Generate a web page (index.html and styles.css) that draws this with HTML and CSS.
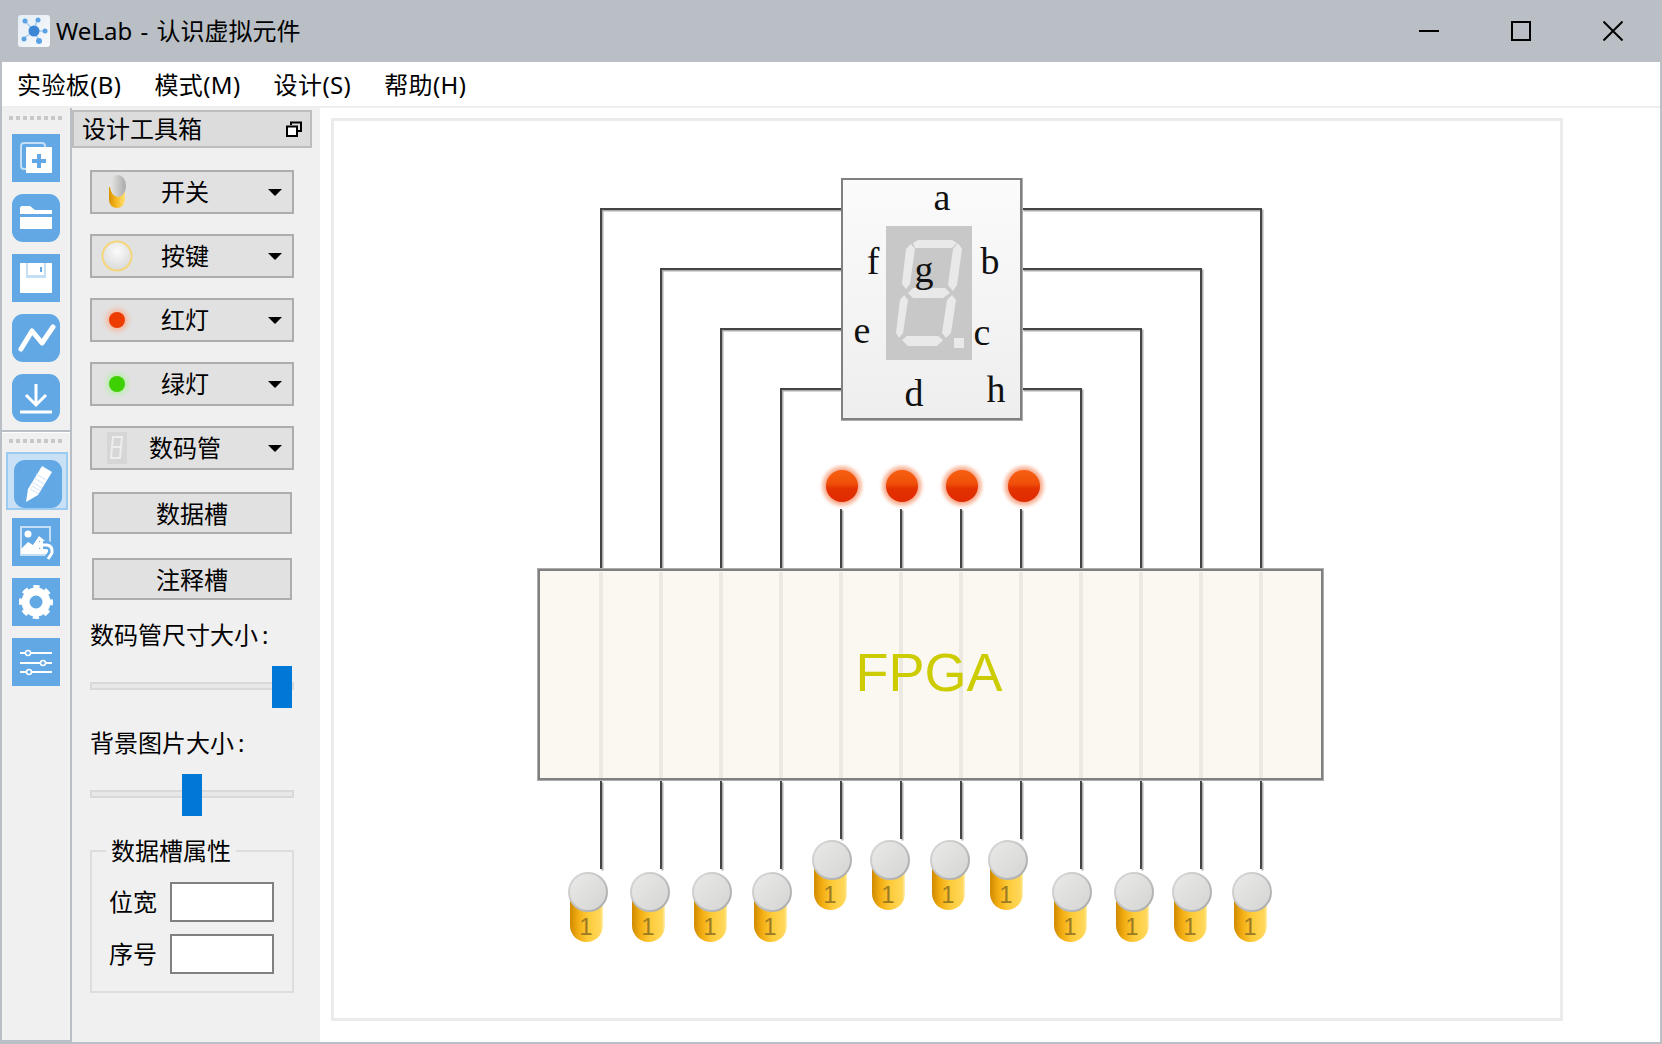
FILE: index.html
```html
<!DOCTYPE html>
<html lang="zh-CN">
<head>
    <meta charset="UTF-8">
    <title>WeLab - 认识虚拟元件</title>
    <link rel="stylesheet" href="styles.css">
</head>
<body>

<div class="window">
    <header class="titlebar">
        <svg class="app-icon" width="32" height="32" viewBox="0 0 32 32">
            <defs>
                <linearGradient id="appBg" x1="0" y1="0" x2="1" y2="1">
                    <stop offset="0" stop-color="#e4edf5"/>
                    <stop offset="1" stop-color="#f7f9fb"/>
                </linearGradient>
            </defs>
            <rect width="32" height="32" rx="3" fill="url(#appBg)"/>
            <path class="app-lines" d="M7 6 16 16M19 5 16 16M25 16H16M6 23 16 16M21 25 16 16"/>
            <circle class="app-dot" cx="16" cy="16" r="5.5"/>
            <circle class="app-dot-s" cx="7" cy="6" r="2.5"/>
            <circle class="app-dot-s" cx="20" cy="5" r="2.5"/>
            <circle class="app-dot-s" cx="27" cy="16" r="2.5"/>
            <circle class="app-dot-s" cx="6" cy="24" r="2.5"/>
            <circle class="app-dot-s" cx="21" cy="26" r="3"/>
        </svg>
        <span class="title-text">WeLab - 认识虚拟元件</span>
        <div class="win-buttons">
            <button class="win-btn" aria-label="minimize">
                <svg width="20" height="20" viewBox="0 0 20 20"><path class="win-glyph" d="M0 10H20"/></svg>
            </button>
            <button class="win-btn" aria-label="maximize">
                <svg width="20" height="20" viewBox="0 0 20 20"><rect class="win-glyph" x="1" y="1" width="18" height="18"/></svg>
            </button>
            <button class="win-btn" aria-label="close">
                <svg width="20" height="20" viewBox="0 0 20 20"><path class="win-glyph" d="M0.5 0.5 19.5 19.5M19.5 0.5 0.5 19.5"/></svg>
            </button>
        </div>
    </header>

    <nav class="menubar">
        <span class="menu-item">实验板(B)</span>
        <span class="menu-item">模式(M)</span>
        <span class="menu-item">设计(S)</span>
        <span class="menu-item">帮助(H)</span>
    </nav>

    <div class="workspace">
        <aside class="toolbar">
            <div class="grip"></div>
            <div class="tool-group">
                <svg class="tool-icon" viewBox="0 0 48 48">
                    <rect class="tile" width="48" height="48"/>
                    <rect class="pale-line" x="9" y="9" width="24" height="26" rx="3"/>
                    <rect class="white" x="14" y="13" width="26" height="26"/>
                    <path class="plus" d="M27 20V34M20 27H34"/>
                </svg>
                <svg class="tool-icon" viewBox="0 0 48 48">
                    <rect class="tile" width="48" height="48" rx="11"/>
                    <path class="white" d="M8 14Q8 12 10 12H18L23 16H40V20H8Z"/>
                    <rect class="white" x="8" y="23" width="32" height="12"/>
                </svg>
                <svg class="tool-icon" viewBox="0 0 48 48">
                    <rect class="tile" width="48" height="48"/>
                    <path class="white" d="M8 9H40V39H8Z"/>
                    <rect class="pale-fill" x="14" y="9" width="20" height="15"/>
                    <rect class="white" x="16" y="9" width="16" height="12"/>
                    <rect class="tile" x="28" y="13" width="2" height="5"/>
                </svg>
                <svg class="tool-icon" viewBox="0 0 48 48">
                    <rect class="tile" width="48" height="48" rx="11"/>
                    <path class="chart-line" d="M9 35 20 17 30 29 41 13"/>
                </svg>
                <svg class="tool-icon" viewBox="0 0 48 48">
                    <rect class="tile" width="48" height="48" rx="11"/>
                    <path class="stroke-w" d="M24 10V31M14 21 24 31 34 21M8 38H40"/>
                </svg>
            </div>
            <div class="toolbar-sep"></div>
            <div class="grip"></div>
            <div class="tool-group tool-group-b">
                <div class="tool-active">
                    <svg class="tool-icon" viewBox="0 0 48 48">
                        <rect class="tile" width="48" height="48" rx="11"/>
                        <path class="white" d="M12 42 14 29 28 6 38 12 24 35Z"/>
                        <path class="hatch" d="M16 29 25 34M22 14 32 20M20 18 30 24M18 22 28 28M18 26 27 31"/>
                    </svg>
                </div>
                <svg class="tool-icon" viewBox="0 0 48 48">
                    <rect class="tile" width="48" height="48"/>
                    <rect class="pale-line" x="9" y="9" width="29" height="28"/>
                    <circle class="white" cx="16" cy="16" r="3.5"/>
                    <path class="white" d="M9 36V31L16 24 21 27 27 18 38 27V36Z"/>
                    <path class="undo undo-gap" d="M27 27H35Q41 28 40 35L36 41"/>
                    <path class="undo" d="M29 27H35Q41 28 40 35L36 41"/>
                    <path class="white" d="M31 21V33L24 27Z"/>
                </svg>
                <svg class="tool-icon" viewBox="0 0 48 48">
                    <rect class="tile" width="48" height="48"/>
                    <circle class="gear-teeth" cx="24" cy="24" r="14.5"/>
                    <circle class="gear-ring" cx="24" cy="24" r="10.5"/>
                </svg>
                <svg class="tool-icon" viewBox="0 0 48 48">
                    <rect class="tile" width="48" height="48"/>
                    <path class="slider-line" d="M8 15H40M8 25H40M8 34H40"/>
                    <circle class="slider-knob" cx="16" cy="15" r="2.5"/>
                    <circle class="slider-knob" cx="31" cy="25" r="2.5"/>
                    <circle class="slider-knob" cx="17" cy="34" r="2.5"/>
                </svg>
            </div>
        </aside>

        <section class="panel">
            <div class="panel-head">
                <span class="panel-title">设计工具箱</span>
                <svg class="float-icon" width="16" height="16" viewBox="0 0 16 16">
                    <path class="float-line" d="M5 4V1.500H15V10H11.500"/>
                    <rect class="float-front" x="1" y="5.500" width="10" height="9.500"/>
                </svg>
            </div>

            <div class="combo">
                <span class="combo-icon">
                    <svg width="20" height="34" viewBox="0 0 20 34">
                        <defs>
                            <linearGradient id="miniBody">
                                <stop offset="0" stop-color="#d99100"/>
                                <stop offset="0.45" stop-color="#f5b91f"/>
                                <stop offset="1" stop-color="#ffe07a"/>
                            </linearGradient>
                            <linearGradient id="miniHead">
                                <stop offset="0" stop-color="#e8e8e6"/>
                                <stop offset="1" stop-color="#a9a9a9"/>
                            </linearGradient>
                        </defs>
                        <path d="M2 12H18V25A8 8 0 0 1 2 25Z" fill="url(#miniBody)"/>
                        <ellipse cx="11" cy="11" rx="8" ry="11" fill="url(#miniHead)"/>
                    </svg>
                </span>
                <span class="combo-label">开关</span>
                <span class="caret"></span>
            </div>
            <div class="combo">
                <span class="combo-icon">
                    <svg width="32" height="32" viewBox="0 0 32 32">
                        <defs>
                            <radialGradient id="miniCap" cx="0.5" cy="0.35" r="0.7">
                                <stop offset="0" stop-color="#fbfbfb"/>
                                <stop offset="1" stop-color="#d6d6d6"/>
                            </radialGradient>
                        </defs>
                        <circle cx="16" cy="16" r="14.500" fill="url(#miniCap)" stroke="#f5d67a" stroke-width="2"/>
                    </svg>
                </span>
                <span class="combo-label">按键</span>
                <span class="caret"></span>
            </div>
            <div class="combo">
                <span class="combo-icon">
                    <span class="mini-led mini-led-red"></span>
                </span>
                <span class="combo-label">红灯</span>
                <span class="caret"></span>
            </div>
            <div class="combo">
                <span class="combo-icon">
                    <span class="mini-led mini-led-green"></span>
                </span>
                <span class="combo-label">绿灯</span>
                <span class="caret"></span>
            </div>
            <div class="combo">
                <span class="combo-icon">
                    <svg width="20" height="32" viewBox="0 0 20 32">
                        <rect width="20" height="32" fill="#d6d6d6"/>
                        <path d="M6 5H15L14 15H5ZM5 15H14L13 26H4Z" fill="none" stroke="#ededed" stroke-width="2"/>
                    </svg>
                </span>
                <span class="combo-label">数码管</span>
                <span class="caret"></span>
            </div>

            <button class="slot-btn slot-btn-first">数据槽</button>
            <button class="slot-btn">注释槽</button>

            <div class="field-label field-label-first">数码管尺寸大小<span class="colon">:</span></div>
            <div class="slider">
                <div class="slider-groove"></div>
                <div class="slider-handle" style="left: 182px"></div>
            </div>

            <div class="field-label">背景图片大小<span class="colon">:</span></div>
            <div class="slider">
                <div class="slider-groove"></div>
                <div class="slider-handle" style="left: 92px"></div>
            </div>

            <fieldset class="group">
                <legend>数据槽属性</legend>
                <div class="form-row">
                    <label>位宽</label>
                    <input type="text" class="form-input">
                </div>
                <div class="form-row">
                    <label>序号</label>
                    <input type="text" class="form-input">
                </div>
            </fieldset>
        </section>

        <main class="board-area">
            <div class="board">
                <!-- viewBox uses window coordinates so the parts can be read off the layout -->
                <svg class="board-svg" width="1226" height="897" viewBox="334 121 1226 897">
                    <defs>
                        <linearGradient id="dispBg" x1="0" y1="0" x2="0" y2="1">
                            <stop offset="0" stop-color="#fbfbfb"/>
                            <stop offset="1" stop-color="#eeeeee"/>
                        </linearGradient>
                        <radialGradient id="ledGlow">
                            <stop offset="0.6" stop-color="#f59272"/>
                            <stop offset="0.8" stop-color="#fbd2c0"/>
                            <stop offset="1" stop-color="#fff" stop-opacity="0"/>
                        </radialGradient>
                        <linearGradient id="ledBall" x1="0" y1="0" x2="0" y2="1">
                            <stop offset="0" stop-color="#f75f10"/>
                            <stop offset="0.42" stop-color="#f0500a"/>
                            <stop offset="0.58" stop-color="#e33200"/>
                            <stop offset="1" stop-color="#e02a00"/>
                        </linearGradient>
                        <linearGradient id="toggleBody">
                            <stop offset="0" stop-color="#cf8a00"/>
                            <stop offset="0.25" stop-color="#f3ad12"/>
                            <stop offset="0.55" stop-color="#fdcb3a"/>
                            <stop offset="0.92" stop-color="#ffd75a"/>
                            <stop offset="1" stop-color="#fff1b5"/>
                        </linearGradient>
                        <linearGradient id="toggleHead" x1="0" y1="0" x2="1" y2="1">
                            <stop offset="0" stop-color="#eaeae8"/>
                            <stop offset="1" stop-color="#d4d4d2"/>
                        </linearGradient>
                        <linearGradient id="toggleRim" x1="0" y1="0" x2="1" y2="1">
                            <stop offset="0" stop-color="#dcdcdc"/>
                            <stop offset="1" stop-color="#a8a8a8"/>
                        </linearGradient>
                        <g id="led">
                            <circle r="24" fill="url(#ledGlow)"/>
                            <circle r="16" fill="url(#ledBall)"/>
                        </g>
                        <g id="toggle">
                            <path d="M-18 0H15V33.500A16.500 16.500 0 0 1 -18 33.500Z" fill="url(#toggleBody)"/>
                            <circle r="19" fill="url(#toggleHead)" stroke="url(#toggleRim)" stroke-width="2"/>
                        </g>
                    </defs>

                    <g class="wire-shadow" transform="translate(1.5 1.5)">
                        <path d="M841 209H601V569M841 269H661V569M841 329H721V569M841 389H781V569"/>
                        <path d="M1022 209H1261V569M1022 269H1201V569M1022 329H1141V569M1022 389H1081V569"/>
                        <path d="M841 509V569M901 509V569M961 509V569M1021 509V569"/>
                        <path d="M601 781V869M661 781V869M721 781V869M781 781V869M841 781V839M901 781V839M961 781V839M1021 781V839M1081 781V869M1141 781V869M1201 781V869M1261 781V869"/>
                    </g>
                    <g class="wire">
                        <path d="M841 209H601V569M841 269H661V569M841 329H721V569M841 389H781V569"/>
                        <path d="M1022 209H1261V569M1022 269H1201V569M1022 329H1141V569M1022 389H1081V569"/>
                        <path d="M841 509V569M901 509V569M961 509V569M1021 509V569"/>
                        <path d="M601 781V869M661 781V869M721 781V869M781 781V869M841 781V839M901 781V839M961 781V839M1021 781V839M1081 781V869M1141 781V869M1201 781V869M1261 781V869"/>
                    </g>

                    <!-- seven segment display -->
                    <rect class="part-edge" x="841" y="178" width="182" height="243"/>
                    <rect class="disp-body" x="842" y="179" width="179" height="240"/>
                    <rect class="disp-face" x="886" y="226" width="86" height="134"/>
                    <g class="segment">
                        <polygon points="913,243 918,240 952,240 957,243 952,248 915,248"/>
                        <polygon points="906,249 911,244 915,249 910,284 906,289 902,284"/>
                        <polygon points="958,243 962,249 957,285 953,291 948,285 953,249"/>
                        <polygon points="908,293 913,288 945,288 950,293 943,298 913,298"/>
                        <polygon points="904,295 908,300 903,333 899,338 896,333 900,300"/>
                        <polygon points="952,295 956,300 951,333 946,338 942,333 947,300"/>
                        <polygon points="902,340 907,336 938,336 943,340 937,346 908,346"/>
                        <rect x="954" y="338" width="10" height="10"/>
                    </g>
                    <g class="pin-name">
                        <text x="942" y="210">a</text>
                        <text x="873" y="274">f</text>
                        <text x="924" y="282">g</text>
                        <text x="990" y="274">b</text>
                        <text x="862" y="343">e</text>
                        <text x="982" y="345">c</text>
                        <text x="914" y="406">d</text>
                        <text x="996" y="402">h</text>
                    </g>

                    <use href="#led" x="842" y="486"/>
                    <use href="#led" x="902" y="486"/>
                    <use href="#led" x="962" y="486"/>
                    <use href="#led" x="1024" y="486"/>

                    <!-- fpga block, wires show faintly through it -->
                    <rect class="part-edge" x="537" y="568" width="787" height="213"/>
                    <rect class="fpga-body" x="539" y="570" width="783" height="209"/>
                    <path class="fpga-rib" d="M601 572V778M661 572V778M721 572V778M781 572V778M841 572V778M901 572V778M961 572V778M1021 572V778M1081 572V778M1141 572V778M1201 572V778M1261 572V778"/>
                    <text class="fpga-text" x="929" y="691">FPGA</text>

                    <use href="#toggle" x="588" y="892"/>
                    <use href="#toggle" x="650" y="892"/>
                    <use href="#toggle" x="712" y="892"/>
                    <use href="#toggle" x="772" y="892"/>
                    <use href="#toggle" x="832" y="860"/>
                    <use href="#toggle" x="890" y="860"/>
                    <use href="#toggle" x="950" y="860"/>
                    <use href="#toggle" x="1008" y="860"/>
                    <use href="#toggle" x="1072" y="892"/>
                    <use href="#toggle" x="1134" y="892"/>
                    <use href="#toggle" x="1192" y="892"/>
                    <use href="#toggle" x="1252" y="892"/>
                    <g class="toggle-num">
                        <text x="586" y="935">1</text>
                        <text x="648" y="935">1</text>
                        <text x="710" y="935">1</text>
                        <text x="770" y="935">1</text>
                        <text x="830" y="903">1</text>
                        <text x="888" y="903">1</text>
                        <text x="948" y="903">1</text>
                        <text x="1006" y="903">1</text>
                        <text x="1070" y="935">1</text>
                        <text x="1132" y="935">1</text>
                        <text x="1190" y="935">1</text>
                        <text x="1250" y="935">1</text>
                    </g>
                </svg>
            </div>
        </main>
    </div>
</div>

</body>
</html>
```

FILE: styles.css
```css
* {
    box-sizing: border-box;
}

body {
    margin: 0;
    font-family: "Noto Sans", "Noto Sans CJK SC", sans-serif;
    font-size: 24px;
    color: #000;
    background-color: #fff;
}

.window {
    width: 1662px;
    height: 1044px;
    display: flex;
    flex-direction: column;
    border: 2px solid #b9bfc4;
    border-top: none;
}

/* title bar */
.titlebar {
    height: 62px;
    flex: none;
    display: flex;
    align-items: center;
    padding-left: 16px;
    background-color: #b9bfc4;
}

.app-icon {
    margin-right: 6px;
}

.app-lines {
    fill: none;
    stroke: #a9cdee;
    stroke-width: 1.5;
}

.app-dot {
    fill: #3c86d6;
}

.app-dot-s {
    fill: #5aa2e4;
}

.title-text {
    line-height: 32px;
    word-spacing: 2px;
}

.win-buttons {
    display: flex;
    margin-left: auto;
    margin-right: 1px;
}

.win-btn {
    width: 92px;
    height: 62px;
    padding: 0;
    border: none;
    background: none;
    display: flex;
    align-items: center;
    justify-content: center;
}

.win-glyph {
    fill: none;
    stroke: #000;
    stroke-width: 2;
}

/* menu */
.menubar {
    height: 46px;
    flex: none;
    display: flex;
    align-items: center;
    gap: 33px;
    padding: 2px 0 0 15px;
    background-color: #fff;
    border-bottom: 2px solid #eeeeee;
}

.menu-item {
    line-height: 32px;
    letter-spacing: 0.4px;
}

.workspace {
    flex: 1;
    display: flex;
    min-height: 0;
}

/* left tool strip */
.toolbar {
    width: 70px;
    flex: none;
    padding-top: 8px;
    background-color: #f0f0f0;
    border-right: 2px solid #b9bfc4;
    border-bottom: 2px solid #b9bfc4;
}

.grip {
    width: 56px;
    height: 4px;
    margin-left: 7px;
    background: repeating-linear-gradient(90deg, #c8c8c8 0, #c8c8c8 4px, transparent 4px, transparent 7px);
}

.tool-group {
    display: flex;
    flex-direction: column;
    align-items: flex-start;
    gap: 12px;
    padding: 14px 0 8px 10px;
}

.tool-group-b {
    padding-top: 9px;
    gap: 12px;
}

.toolbar-sep {
    height: 3px;
    margin-bottom: 6px;
    border-top: 2px solid #b9bfc4;
    border-bottom: 1px solid #fff;
}

.tool-icon {
    width: 48px;
    height: 48px;
    display: block;
    flex: none;
}

.tool-active {
    width: 62px;
    height: 58px;
    margin: 0 0 -4px -6px;
    padding: 6px 0 0 6px;
    background-color: #c9e1f7;
    border: 2px solid #9ccbf2;
}

.tile {
    fill: #62a8e4;
}

.white {
    fill: #fff;
}

.pale-line {
    fill: none;
    stroke: #c4def5;
    stroke-width: 2;
}

.pale-fill {
    fill: #c4def5;
}

.plus {
    fill: none;
    stroke: #62a8e4;
    stroke-width: 4;
}

.chart-line {
    fill: none;
    stroke: #fff;
    stroke-width: 5;
    stroke-linecap: round;
    stroke-linejoin: round;
}

.stroke-w {
    fill: none;
    stroke: #fff;
    stroke-width: 3;
}

.hatch {
    fill: none;
    stroke: #cfe4f7;
    stroke-width: 1;
}

.undo {
    fill: none;
    stroke: #fff;
    stroke-width: 3;
}

.undo-gap {
    stroke: #62a8e4;
    stroke-width: 8;
}

.gear-teeth {
    fill: none;
    stroke: #fff;
    stroke-width: 5;
    stroke-dasharray: 6 5.39;
    stroke-dashoffset: 3;
}

.gear-ring {
    fill: none;
    stroke: #fff;
    stroke-width: 8;
}

.slider-line {
    fill: none;
    stroke: #fff;
    stroke-width: 2;
}

.slider-knob {
    fill: #62a8e4;
    stroke: #fff;
    stroke-width: 1.5;
}

/* design panel */
.panel {
    width: 248px;
    flex: none;
    padding: 2px 0 0 18px;
    background-color: #f0f0f0;
}

.panel-head {
    width: 240px;
    height: 38px;
    margin: 0 0 22px -18px;
    padding: 0 8px;
    display: flex;
    align-items: center;
    justify-content: space-between;
    background-color: #dcdcdc;
    border: 2px solid #bdbdbd;
}

.panel-title {
    padding-bottom: 3px;
}

.float-line {
    fill: none;
    stroke: #000;
    stroke-width: 2;
}

.float-front {
    fill: #fff;
    stroke: #000;
    stroke-width: 2;
}

.combo {
    width: 204px;
    height: 44px;
    margin-bottom: 20px;
    display: flex;
    align-items: center;
    background-color: #e1e1e1;
    border: 2px solid #adadad;
}

.combo-icon {
    width: 52px;
    padding-right: 3px;
    flex: none;
    display: flex;
    align-items: center;
    justify-content: center;
}

.combo-label {
    width: 82px;
    flex: none;
    text-align: center;
    line-height: 32px;
}

.caret {
    width: 0;
    height: 0;
    margin-left: 42px;
    border-left: 7px solid transparent;
    border-right: 7px solid transparent;
    border-top: 7px solid #000;
}

.mini-led {
    width: 16px;
    height: 16px;
    border-radius: 50%;
}

.mini-led-red {
    background-color: #ec3c02;
    box-shadow: 0 0 5px 3px #f7b9a0;
}

.mini-led-green {
    background-color: #3ed000;
    box-shadow: 0 0 5px 3px #bdeeb0;
}

.slot-btn {
    display: block;
    width: 200px;
    height: 42px;
    margin: 0 0 24px 2px;
    padding: 0 0 2px;
    font: inherit;
    color: #000;
    background-color: #e1e1e1;
    border: 2px solid #adadad;
}

.slot-btn-first {
    margin-top: 22px;
}

.field-label {
    height: 32px;
    line-height: 32px;
    margin-bottom: 15px;
    white-space: nowrap;
}

.field-label-first {
    margin-top: -5px;
}

.colon {
    margin-left: 4px;
}

.slider {
    position: relative;
    width: 204px;
    height: 42px;
    margin-bottom: 19px;
}

.slider-groove {
    position: absolute;
    left: 0;
    right: 0;
    top: 16px;
    height: 8px;
    background-color: #e8e8e8;
    border: 2px solid #d9d9d9;
}

.slider-handle {
    position: absolute;
    top: 0;
    width: 20px;
    height: 42px;
    background-color: #0078d7;
}

.group {
    width: 204px;
    height: 158px;
    margin: 18px 0 0 0;
    padding: 15px 0 0 17px;
    border: 2px solid #dddddd;
}

.group legend {
    margin-left: -3px;
    padding: 0 5px;
    line-height: 32px;
}

.form-row {
    display: flex;
    align-items: center;
    height: 40px;
    margin-bottom: 12px;
}

.form-row label {
    width: 61px;
    flex: none;
    line-height: 32px;
}

.form-input {
    width: 104px;
    height: 40px;
    padding: 0;
    background-color: #fff;
    border: 2px solid #808080;
    border-radius: 0;
    outline: none;
}

/* board */
.board-area {
    flex: 1;
    min-width: 0;
    padding: 10px 0 0 11px;
    background-color: #fff;
}

.board {
    width: 1232px;
    height: 903px;
    background-color: #fff;
    border: 3px solid #ebebeb;
}

.board-svg {
    display: block;
}

.wire,
.wire-shadow {
    fill: none;
    stroke-width: 2;
}

.wire {
    stroke: #444444;
}

.wire-shadow {
    stroke: #adadad;
}

.part-edge {
    fill: #adadad;
}

.disp-body {
    fill: url(#dispBg);
    stroke: #808080;
    stroke-width: 2;
}

.disp-face {
    fill: #c8c8c8;
}

.segment {
    fill: #e9e9e9;
}

.pin-name text {
    font-family: "Liberation Serif", serif;
    font-size: 38px;
    text-anchor: middle;
    fill: #111;
}

.fpga-body {
    fill: #faf8f1;
    stroke: #808080;
    stroke-width: 2;
}

.fpga-rib {
    fill: none;
    stroke: #ece9e2;
    stroke-width: 4;
}

.fpga-text {
    font-family: "Liberation Sans", Arial, sans-serif;
    font-size: 54px;
    text-anchor: middle;
    fill: #cccc00;
}

.toggle-num text {
    font-family: "Liberation Sans", Arial, sans-serif;
    font-size: 24px;
    text-anchor: middle;
    fill: #9c7b22;
}
```
